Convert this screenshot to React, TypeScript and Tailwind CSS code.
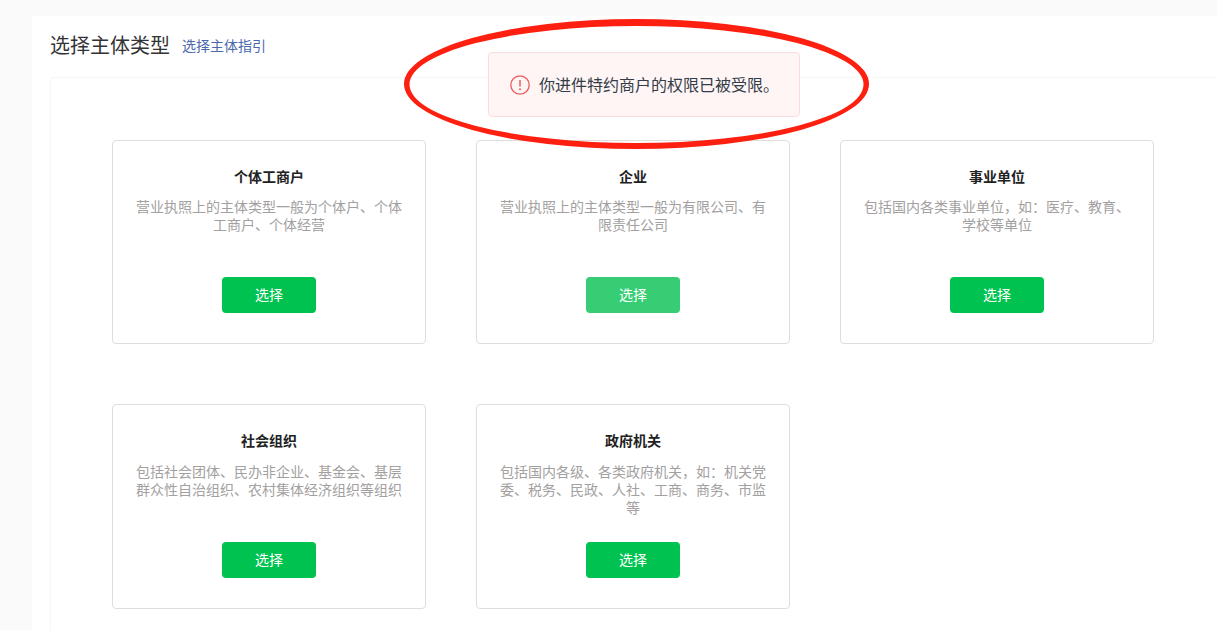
const cards = [
  { t: "个体工商户", d: "营业执照上的主体类型一般为个体户、个体工商户、个体经营" },
  { t: "企业", d: "营业执照上的主体类型一般为有限公司、有限责任公司", hover: true },
  { t: "事业单位", d: "包括国内各类事业单位，如：医疗、教育、学校等单位" },
  { t: "社会组织", d: "包括社会团体、民办非企业、基金会、基层群众性自治组织、农村集体经济组织等组织" },
  { t: "政府机关", d: "包括国内各级、各类政府机关，如：机关党委、税务、民政、人社、工商、商务、市监等" },
];

function Card({ t, d, hover }: { t: string; d: string; hover?: boolean }) {
  return (
    <div className="flex h-[204.4px] w-[314px] flex-col items-center rounded border border-[#dedede] bg-white px-[23px] pt-[26px]">
      <div className="text-[14px] font-bold leading-[18px] text-[#222222]">{t}</div>
      <p className="mt-[12.2px] h-[54px] text-center text-[14px] leading-[18px] text-[#a3a0a0]">{d}</p>
      <button className={`mt-[26px] h-9 w-[94px] rounded pb-[1px] text-[14px] text-white ${hover ? "bg-[#36cd75]" : "bg-[#00c250]"}`}>选择</button>
    </div>
  );
}

export default function App() {
  return (
    <div className="relative h-[630px] w-[1217px] overflow-hidden bg-[#fafafa] pl-8 pt-4 font-['Noto_Sans_CJK_SC','Liberation_Sans',sans-serif]">
      <div className="h-full w-[1300px] bg-white pl-[18px]">
        <div className="flex h-[61px] items-center pb-[3px]">
          <h1 className="text-[20px] font-normal leading-7 text-[#333333]">选择主体类型</h1>
          <a className="ml-3 text-[14px] leading-5 text-[#4a69ad]">选择主体指引</a>
        </div>
        <div className="h-[700px] rounded border border-[#f6f6f6] pl-[61px] pt-[62px]">
          <div className="grid w-[1042px] grid-cols-[314px_314px_314px] gap-x-[50px] gap-y-[60px]">
            {cards.map((c) => (
              <Card key={c.t} {...c} />
            ))}
          </div>
        </div>
      </div>

      <div className="absolute left-[488px] top-[52px] flex h-[65px] w-[312px] items-center rounded border border-[#fbdcdc] bg-[#fff5f5] pl-[21px]">
        <svg width="20" height="20" viewBox="0 0 20 20" fill="none">
          <circle cx="10" cy="10" r="9.2" stroke="#ea5d5d" strokeWidth="1.3" />
          <path d="M10 5v6.5" stroke="#ea5d5d" strokeWidth="1.5" />
          <circle cx="10" cy="14.2" r="1" fill="#ea5d5d" />
        </svg>
        <span className="mb-[2px] ml-[9px] whitespace-nowrap text-[16px] text-[#333c48]">你进件特约商户的权限已被受限。</span>
      </div>

      <svg className="absolute left-[400px] top-[15px]" width="475" height="140" viewBox="0 0 475 140" fill="none">
        <path
          fillRule="evenodd"
          fill="#fd2010"
          d="M4 69a232.5 65 0 1 0 465 0a232.5 65 0 1 0 -465 0ZM9.5 69.5a227 58.5 0 1 0 454 0a227 58.5 0 1 0 -454 0Z"
        />
      </svg>
    </div>
  );
}
